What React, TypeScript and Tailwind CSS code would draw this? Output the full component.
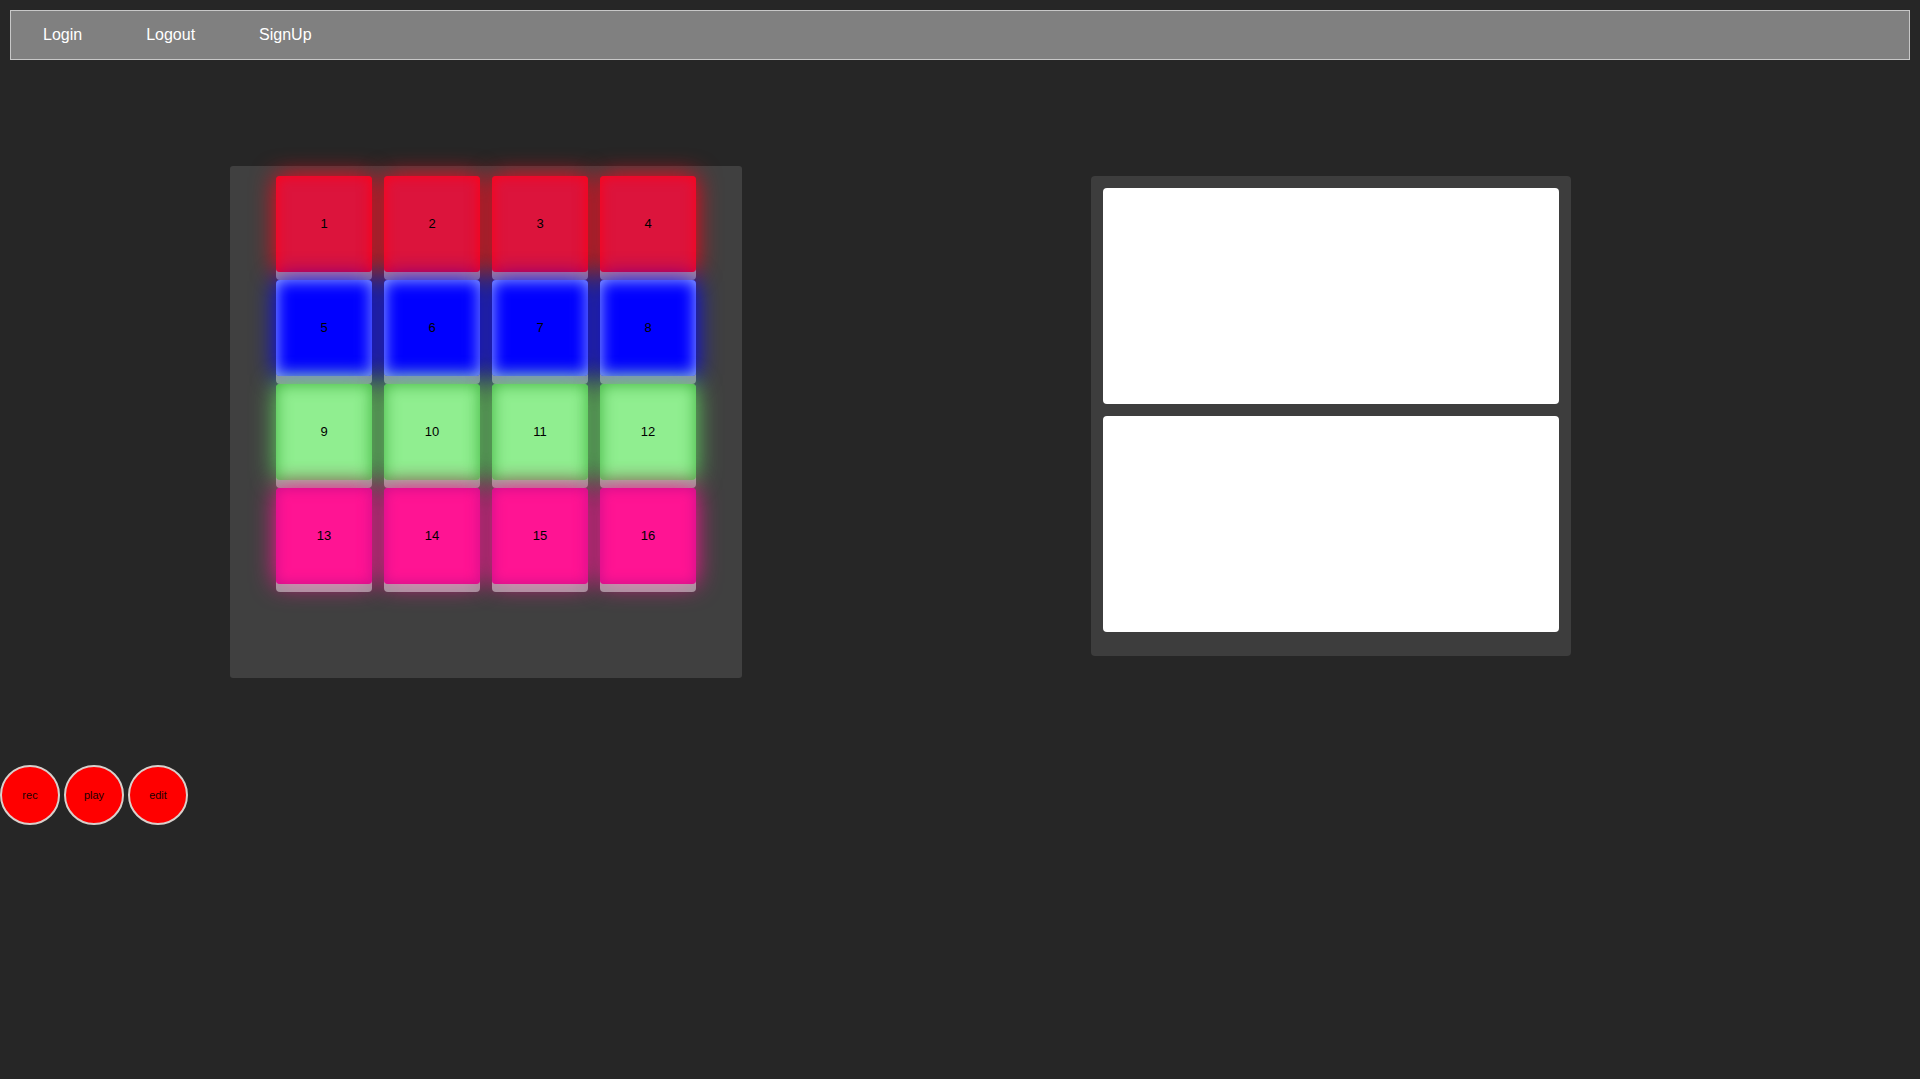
import React from "react";

const rows = [
    { bg: "bg-[#dc143c]", shadow: "shadow-[inset_0_0_14px_#ff0018,0_8px_0_rgba(255,255,255,0.45),0_0_24px_#ff0018]" },
    { bg: "bg-[#0000ff]", shadow: "shadow-[inset_0_0_16px_#9db4ff,0_8px_0_rgba(255,255,255,0.45),0_0_24px_#0000ff]" },
    { bg: "bg-[#90ee90]", shadow: "shadow-[inset_0_0_16px_#3fb03f,0_8px_0_rgba(255,255,255,0.45),0_0_24px_#62d862]" },
    { bg: "bg-[#ff1493]", shadow: "shadow-[inset_0_0_14px_#c8108a,0_8px_0_rgba(255,255,255,0.45),0_0_24px_#ff1493]" },
];

const Pad = ({ n, row }: { n: number; row: number }) => (
    <div className={`w-[96px] h-[96px] rounded-[4px] flex items-center justify-center text-[13px] text-black ${rows[row].bg} ${rows[row].shadow}`}>
        {n}
    </div>
);

const App = () => {
    const pads = Array.from({ length: 16 }, (_, i) => i + 1);
    return (
        <div className="min-h-screen bg-[#262626] font-['Liberation_Sans',Arial,sans-serif] overflow-hidden">
            {/* nav */}
            <nav className="mx-[10px] mt-[10px] h-[50px] bg-[#808080] border border-[#c8c8c8] flex items-center">
                <a className="px-[32px] text-[16px] text-white">Login</a>
                <a className="px-[32px] text-[16px] text-white">Logout</a>
                <a className="px-[32px] text-[16px] text-white">SignUp</a>
            </nav>

            <div className="flex items-start mt-[106px]">
                {/* pad board */}
                <div className="ml-[230px] w-[512px] h-[512px] bg-[#404040] rounded-[3px] pt-[10px] pl-[46px]">
                    <div className="grid grid-cols-[repeat(4,96px)] gap-x-[12px] gap-y-[8px]">
                        {pads.map((n) => (
                            <Pad key={n} n={n} row={Math.floor((n - 1) / 4)} />
                        ))}
                    </div>
                </div>

                {/* screens */}
                <div className="ml-[349px] mt-[10px] w-[480px] h-[480px] bg-[#3d3d3d] rounded-[4px] p-[12px]">
                    <div className="h-[216px] bg-white rounded-[4px] mb-[12px]"></div>
                    <div className="h-[216px] bg-white rounded-[4px]"></div>
                </div>
            </div>

            {/* transport */}
            <div className="flex gap-[4px] mt-[87px]">
                <button className="w-[60px] h-[60px] rounded-full bg-[#ff0000] border-2 border-[#d8d0cc] text-[11px] text-[#1a0000]">rec</button>
                <button className="w-[60px] h-[60px] rounded-full bg-[#ff0000] border-2 border-[#d8d0cc] text-[11px] text-[#1a0000]">play</button>
                <button className="w-[60px] h-[60px] rounded-full bg-[#ff0000] border-2 border-[#d8d0cc] text-[11px] text-[#1a0000]">edit</button>
            </div>
        </div>
    );
};

export default App;
